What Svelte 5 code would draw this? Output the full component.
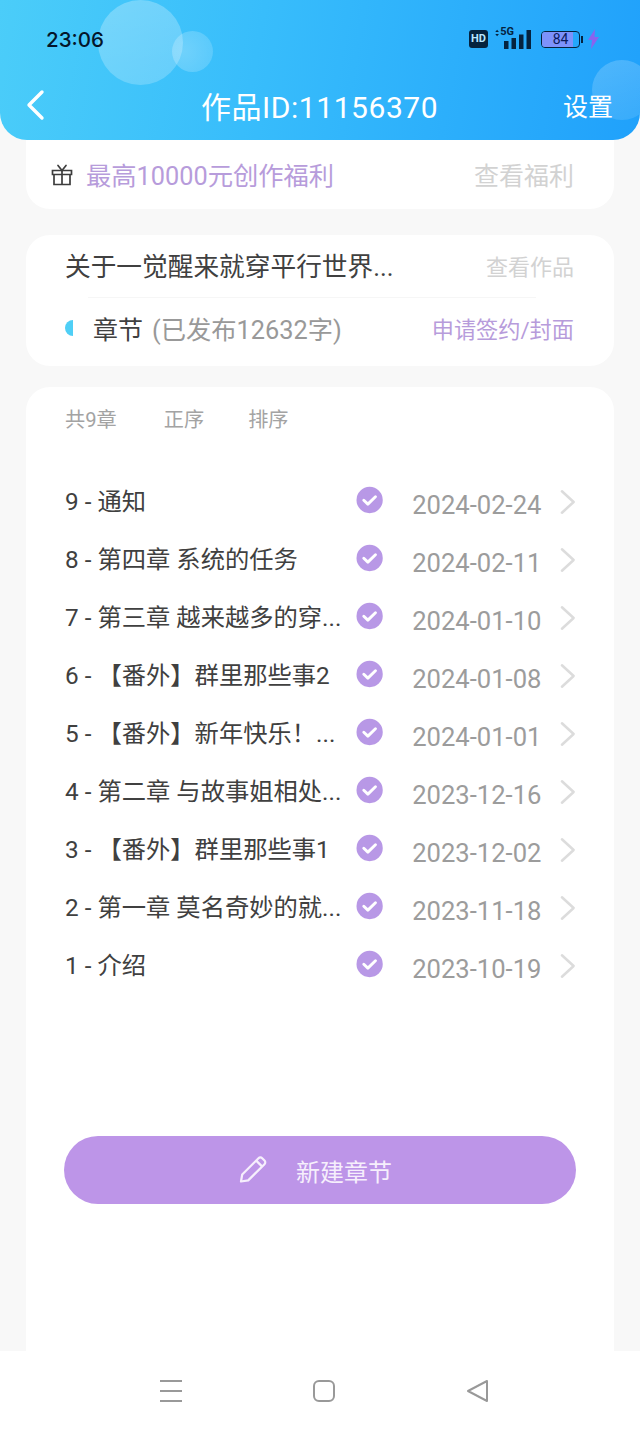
<script lang="ts">
  const chapters = [
    { title: "9 - 通知", date: "2024-02-24" },
    { title: "8 - 第四章 系统的任务", date: "2024-02-11" },
    { title: "7 - 第三章 越来越多的穿...", date: "2024-01-10" },
    { title: "6 - 【番外】群里那些事2", date: "2024-01-08" },
    { title: "5 - 【番外】新年快乐！...", date: "2024-01-01" },
    { title: "4 - 第二章 与故事姐相处...", date: "2023-12-16" },
    { title: "3 - 【番外】群里那些事1", date: "2023-12-02" },
    { title: "2 - 第一章 莫名奇妙的就...", date: "2023-11-18" },
    { title: "1 - 介绍", date: "2023-10-19" },
  ];
</script>

<div class="page">
  <header class="top">
    <span class="bubble big"></span>
    <span class="bubble small"></span>
    <span class="bubble corner"></span>

    <div class="status">
      <span class="clock">23:06</span>
      <div class="status-icons">
        <span class="hd">HD</span>
        <span class="net">
          <svg width="8" height="14" viewBox="0 0 8 14"><path d="M4 1 7.5 5h-7zM4 13 .5 9h7z" fill="#05233f" /></svg>
          <span class="five-g">5G</span>
        </span>
        <svg class="bars" width="28" height="19" viewBox="0 0 28 19">
          <rect x="0" y="11" width="4.5" height="8" fill="#05233f" />
          <rect x="7.5" y="8" width="4.5" height="11" fill="#05233f" />
          <rect x="15" y="4.5" width="4.5" height="14.5" fill="#05233f" />
          <rect x="22.5" y="0" width="4.5" height="19" fill="#05233f" />
        </svg>
        <span class="battery"><span class="battery-fill"></span><span class="battery-num">84</span></span>
        <span class="battery-tip"></span>
        <svg width="13" height="20" viewBox="0 0 13 20"><path d="M8 0 1 11h4l-1 9 8-12H7.5z" fill="#8a63ee" /></svg>
      </div>
    </div>

    <div class="nav-row">
      <svg class="back" width="20" height="32" viewBox="0 0 20 32">
        <path d="M17 3 4 16l13 13" fill="none" stroke="#fff" stroke-width="3.4" stroke-linecap="round" stroke-linejoin="round" />
      </svg>
      <span class="title">作品ID:11156370</span>
      <span class="settings">设置</span>
    </div>
  </header>

  <main class="content">
    <section class="card welfare">
      <svg class="gift" width="22" height="22" viewBox="0 0 22 22" fill="none" stroke="#3d3d3d" stroke-width="1.7">
        <path d="M1.5 6.5h19v4h-19zM3 10.5V20.5h16V10.5M11 6.5v14" />
        <path d="M11 6.5 7 1.5M11 6.5l4-5" stroke-linecap="round" />
      </svg>
      <span class="welfare-text">最高10000元创作福利</span>
      <span class="welfare-link">查看福利</span>
    </section>

    <section class="card work">
      <div class="work-row first">
        <span class="work-name">关于一觉醒来就穿平行世界...</span>
        <span class="work-link">查看作品</span>
      </div>
      <div class="divider"></div>
      <div class="work-row second">
        <span class="half-dot"></span>
        <span class="work-label">章节</span>
        <span class="work-count">(已发布12632字)</span>
        <span class="apply">申请签约/封面</span>
      </div>
    </section>

    <section class="card list">
      <div class="list-head">
        <span class="total">共9章</span>
        <span class="sort-a">正序</span>
        <span class="sort-b">排序</span>
      </div>

      <div class="rows">
        {#each chapters as ch}
          <div class="row">
            <span class="row-title">{ch.title}</span>
            <svg class="tick" width="28" height="28" viewBox="0 0 28 28">
              <circle cx="14" cy="14" r="13.5" fill="#b898e6" />
              <path d="M8 14.2l4.2 4L20 10.6" fill="none" stroke="#fff" stroke-width="3" stroke-linecap="round" stroke-linejoin="round" />
            </svg>
            <span class="row-date">{ch.date}</span>
            <svg class="chev" width="16" height="26" viewBox="0 0 16 26">
              <path d="M2 2l12 11L2 24" fill="none" stroke="#dcdcdc" stroke-width="2.6" stroke-linecap="round" stroke-linejoin="round" />
            </svg>
          </div>
        {/each}
      </div>

      <button class="new-btn">
        <svg width="30" height="30" viewBox="0 0 30 30" fill="none" stroke="#f6effc" stroke-width="2.2" stroke-linejoin="round">
          <path d="M3 26.5l1.2-7L20.5 3.2a2.6 2.6 0 0 1 3.7 0l2.3 2.3a2.6 2.6 0 0 1 0 3.7L10.2 25.4z" />
          <path d="M18.2 5.6l6 6" />
        </svg>
        <span>新建章节</span>
      </button>
    </section>
  </main>

  <nav class="sys-nav">
    <svg width="24" height="24" viewBox="0 0 24 24" stroke="#999" stroke-width="2">
      <path d="M1 2h22M1 12h22M1 22h22" />
    </svg>
    <svg width="24" height="24" viewBox="0 0 24 24" fill="none" stroke="#999" stroke-width="2">
      <rect x="2" y="2" width="20" height="20" rx="5" />
    </svg>
    <svg width="24" height="24" viewBox="0 0 24 24" fill="none" stroke="#999" stroke-width="2" stroke-linejoin="round">
      <path d="M22 2v20L3 12z" />
    </svg>
  </nav>
</div>

<style>
  :global(body) {
    margin: 0;
    background: #f8f8f8;
  }

  .page {
    width: 640px;
    height: 1431px;
    display: flex;
    flex-direction: column;
    overflow: hidden;
    font-family: Roboto, "Noto Sans CJK SC", sans-serif;
    background: #f8f8f8;
  }

  .top {
    position: relative;
    height: 140px;
    flex-shrink: 0;
    overflow: hidden;
    border-radius: 0 0 27px 27px;
    background: linear-gradient(100deg, #4bcdf9 0%, #38bdfb 40%, #20a1fb 100%);
  }

  .bubble {
    position: absolute;
    border-radius: 50%;
  }
  .bubble.big {
    left: 98px;
    top: 0;
    width: 85px;
    height: 85px;
    background: linear-gradient(160deg, rgba(255, 255, 255, 0.28), rgba(255, 255, 255, 0.2));
  }
  .bubble.small {
    left: 172px;
    top: 31px;
    width: 41px;
    height: 41px;
    background: radial-gradient(circle at 30% 50%, rgba(255, 255, 255, 0.26), rgba(255, 255, 255, 0.14));
  }
  .bubble.corner {
    left: 592px;
    top: 60px;
    width: 60px;
    height: 60px;
    background: linear-gradient(160deg, rgba(255, 255, 255, 0.2), rgba(255, 255, 255, 0.1));
  }

  .status {
    position: relative;
    display: flex;
    align-items: center;
    justify-content: space-between;
    height: 24px;
    padding: 27px 40px 0 46px;
  }
  .clock {
    font-family: Inter, sans-serif;
    font-size: 20.5px;
    font-weight: 500;
    color: #04162b;
  }
  .status-icons {
    display: flex;
    align-items: center;
    color: #05233f;
  }
  .hd {
    width: 19px;
    height: 18px;
    margin-right: 7px;
    border-radius: 3px;
    background: #05233f;
    color: #b9e6ff;
    font-size: 11px;
    font-weight: 700;
    line-height: 18px;
    text-align: center;
  }
  .net {
    display: flex;
    align-items: flex-start;
    width: 19px;
    height: 20px;
    margin-right: -10px;
    margin-top: -6px;
  }
  .five-g {
    font-size: 11px;
    font-weight: 700;
    line-height: 12px;
    margin-left: 1px;
  }
  .bars {
    margin-right: 9px;
  }
  .battery {
    position: relative;
    width: 37px;
    height: 15px;
    border: 1.5px solid #05233f;
    border-radius: 4px;
    overflow: hidden;
  }
  .battery-fill {
    display: block;
    width: 84%;
    height: 100%;
    background: #7d92fb;
  }
  .battery-num {
    position: absolute;
    inset: 0;
    text-align: center;
    font-size: 14px;
    line-height: 15px;
    color: #0a1b5c;
  }
  .battery-tip {
    width: 2px;
    height: 7px;
    margin: 0 4px 0 1px;
    background: #05233f;
  }

  .nav-row {
    position: relative;
    display: flex;
    align-items: center;
    height: 40px;
    margin-top: 34px;
    padding: 0 27px 0 25px;
    color: #fff;
  }
  .back {
    flex-shrink: 0;
  }
  .title {
    margin-left: 156px;
    font-size: 30px;
    letter-spacing: 0.55px;
    white-space: nowrap;
  }
  .settings {
    margin-left: auto;
    font-size: 25px;
  }

  .content {
    flex: 1;
    min-height: 0;
    display: flex;
    flex-direction: column;
    padding: 0 26px;
  }

  .card {
    background: #fff;
    border-radius: 24px;
  }

  .welfare {
    display: flex;
    align-items: center;
    height: 69px;
    padding: 0 40px 0 25px;
    border-radius: 0 0 24px 24px;
    box-sizing: border-box;
  }
  .gift {
    margin-right: 13px;
  }
  .welfare-text {
    font-size: 25.3px;
    color: #b79cdb;
    margin-top: -2px;
  }
  .welfare-link {
    margin-left: auto;
    font-size: 25px;
    color: #d2d2d2;
    margin-top: -2px;
  }

  .work {
    margin-top: 26px;
    height: 131px;
    flex-shrink: 0;
  }
  .work-row {
    display: flex;
    align-items: center;
    padding: 0 40px 0 39px;
  }
  .work-row.first {
    height: 62px;
    padding-bottom: 3px;
    box-sizing: border-box;
  }
  .work-row.second {
    height: 66px;
    padding-bottom: 6px;
    box-sizing: border-box;
  }
  .work-name {
    font-size: 25.7px;
    color: #404040;
  }
  .work-link {
    margin-left: auto;
    font-size: 22px;
    color: #d2d2d2;
  }
  .divider {
    height: 1px;
    margin: 0 78px 0 62px;
    background: #f6f6f6;
  }
  .half-dot {
    width: 8px;
    height: 16px;
    margin-right: 20px;
    border-radius: 8px 0 0 8px;
    background: #4fcff6;
  }
  .work-label {
    font-size: 25px;
    color: #404040;
  }
  .work-count {
    margin-left: 9px;
    font-size: 25.3px;
    color: #999;
  }
  .apply {
    margin-left: auto;
    font-size: 22.2px;
    color: #b79cdb;
  }

  .list {
    margin-top: 21px;
    flex: 1;
    min-height: 0;
    padding: 0 38px 0 39px;
    border-radius: 24px 24px 0 0;
  }
  .list-head {
    display: flex;
    align-items: center;
    height: 62px;
    font-size: 20.2px;
    color: #a3a3a3;
  }
  .sort-a {
    margin-left: 47px;
  }
  .sort-b {
    margin-left: 44px;
  }

  .rows {
    margin-top: 23px;
  }
  .row {
    display: flex;
    align-items: center;
    height: 58px;
  }
  .row-title {
    width: 300px;
    font-size: 24.3px;
    color: #404040;
    white-space: nowrap;
    overflow: hidden;
    margin-top: -4px;
  }
  .tick {
    margin-left: -1px;
    margin-top: -2px;
  }
  .row-date {
    margin-left: 29px;
    font-size: 25.6px;
    color: #9c9c9c;
    margin-top: 8px;
    white-space: nowrap;
  }
  .chev {
    margin-left: 19px;
    margin-top: 1px;
  }

  .new-btn {
    display: flex;
    align-items: center;
    width: 512px;
    height: 68px;
    margin: 142px 0 0 -1px;
    padding: 0 0 0 174px;
    border: none;
    border-radius: 34px;
    background: #bd95e8;
    color: #f6effc;
    font: inherit;
    font-size: 24px;
    box-sizing: border-box;
  }
  .new-btn span {
    margin-left: 28px;
  }

  .sys-nav {
    height: 80px;
    flex-shrink: 0;
    display: flex;
    align-items: center;
    background: #fff;
    padding: 0 0 0 159px;
    gap: 129px;
  }
</style>
